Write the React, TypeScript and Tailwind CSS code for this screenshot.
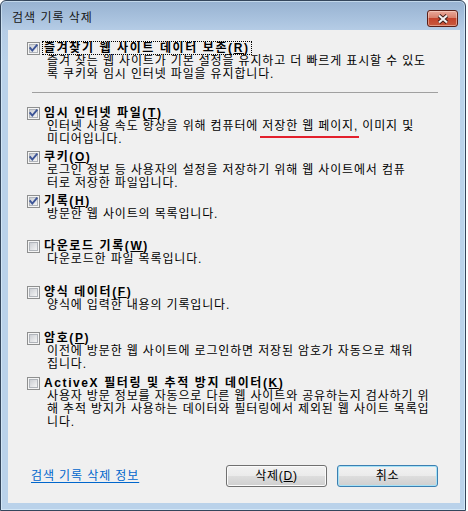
import React from "react";

type Item = {
  title: string;
  key: string;
  checked: boolean;
  focused?: boolean;
  top: string;
  lines: React.ReactNode[];
};

function CheckBox({ checked }: { checked: boolean }) {
  return (
    <svg width="13" height="13" viewBox="0 0 13 13" className="shrink-0">
      <defs>
        <linearGradient id="cbfill" x1="0" y1="0" x2="1" y2="1">
          <stop offset="0" stopColor="#c9ccd1" />
          <stop offset="1" stopColor="#f7f7f7" />
        </linearGradient>
      </defs>
      <rect x="0.5" y="0.5" width="12" height="12" fill="#f5f5f5" stroke="#8e8f8f" />
      <rect x="2.5" y="2.5" width="8" height="8" fill="url(#cbfill)" stroke="#b0b4ba" />
      {checked && (
        <path
          d="M3.3 6.2 L5.3 8.6 L9.7 3.3"
          fill="none"
          stroke="#3d5597"
          strokeWidth="1.9"
          strokeLinecap="square"
        />
      )}
    </svg>
  );
}

function CloseButton() {
  return (
    <div className="mt-[9px] w-[31px] h-[17px] rounded-[3px] border border-[#5a1f18] bg-[linear-gradient(to_bottom,#e9a99b_0%,#d8806c_45%,#c4432c_50%,#c95a3e_100%)] shadow-[inset_0_0_0_1px_rgba(255,230,220,0.45)] flex items-center justify-center">
      <svg width="14" height="10" viewBox="0 0 14 10">
        <path d="M3 1.5 L11 8.5 M11 1.5 L3 8.5" stroke="#3b1a16" strokeWidth="4" />
        <path d="M3 1.5 L11 8.5 M11 1.5 L3 8.5" stroke="#f2f2f2" strokeWidth="2.2" />
      </svg>
    </div>
  );
}

function Marked({ children }: { children: React.ReactNode }) {
  return (
    <span className="relative inline-block leading-[13px]">
      {children}
      <span className="absolute left-[-2px] right-[-1px] top-[16px] h-[2px] bg-[#e3202c]" />
    </span>
  );
}

const items: Item[] = [
  {
    title: "즐겨찾기 웹 사이트 데이터 보존",
    key: "R",
    checked: true,
    focused: true,
    top: "mt-[11px]",
    lines: [
      "즐겨 찾는 웹 사이트가 기본 설정을 유지하고 더 빠르게 표시할 수 있도",
      "록 쿠키와 임시 인터넷 파일을 유지합니다.",
    ],
  },
  {
    title: "임시 인터넷 파일",
    key: "T",
    checked: true,
    top: "mt-[13px]",
    lines: [
      <>
        인터넷 사용 속도 향상을 위해 컴퓨터에 <Marked>저장한 웹 페이지,</Marked> 이미지 및
      </>,
      "미디어입니다.",
    ],
  },
  {
    title: "쿠키",
    key: "O",
    checked: true,
    top: "mt-[4px]",
    lines: [
      "로그인 정보 등 사용자의 설정을 저장하기 위해 웹 사이트에서 컴퓨",
      "터로 저장한 파일입니다.",
    ],
  },
  {
    title: "기록",
    key: "H",
    checked: true,
    top: "mt-[4px]",
    lines: ["방문한 웹 사이트의 목록입니다."],
  },
  {
    title: "다운로드 기록",
    key: "W",
    checked: false,
    top: "mt-[18px]",
    lines: ["다운로드한 파일 목록입니다."],
  },
  {
    title: "양식 데이터",
    key: "F",
    checked: false,
    top: "mt-[19px]",
    lines: ["양식에 입력한 내용의 기록입니다."],
  },
  {
    title: "암호",
    key: "P",
    checked: false,
    top: "mt-[19px]",
    lines: [
      "이전에 방문한 웹 사이트에 로그인하면 저장된 암호가 자동으로 채워",
      "집니다.",
    ],
  },
  {
    title: "ActiveX 필터링 및 추적 방지 데이터",
    key: "K",
    checked: false,
    top: "mt-[5px]",
    lines: [
      "사용자 방문 정보를 자동으로 다른 웹 사이트와 공유하는지 검사하기 위",
      "해 추적 방지가 사용하는 데이터와 필터링에서 제외된 웹 사이트 목록입",
      "니다.",
    ],
  },
];

function Section({ item }: { item: Item }) {
  return (
    <div className={item.top}>
      <div className="flex items-center h-[14px]">
        <CheckBox checked={item.checked} />
        <span
          className={`ml-[2px] px-[1px] h-[14px] leading-[12px] font-bold tracking-[1.6px] whitespace-nowrap border ${
            item.focused ? "border-dotted border-black" : "border-transparent"
          }`}
        >
          {item.title}(<span className="underline underline-offset-[1px]">{item.key}</span>)
        </span>
      </div>
      <div className="pl-[20px]">
        {item.lines.map((l, i) => (
          <div key={i} className="leading-[13px] h-[13px] whitespace-nowrap tracking-[0.85px]">
            {l}
          </div>
        ))}
      </div>
    </div>
  );
}

function Button({ label, k, focused }: { label: string; k?: string; focused?: boolean }) {
  return (
    <button
      className={`w-[101px] h-[22px] rounded-[3px] border text-[12px] leading-[14px] tracking-[0.7px] text-black bg-[linear-gradient(to_bottom,#f2f2f2_0%,#ebebeb_48%,#dddddd_52%,#cfcfcf_100%)] ${
        focused
          ? "border-[#3c7fb1] shadow-[inset_0_0_0_1px_#a6e2f7]"
          : "border-[#707070] shadow-[inset_0_0_0_1px_#fbfbfb]"
      }`}
    >
      {label}
      {k && (
        <>
          (<span className="underline">{k}</span>)
        </>
      )}
    </button>
  );
}

export default function App() {
  return (
    <div className="w-[468px] h-[511px] bg-white font-['Liberation_Sans','Noto_Sans_CJK_KR',sans-serif] text-[12px] text-black">
      <div className="w-[466px] h-[511px] rounded-t-[6px] border border-[#34465c] bg-[linear-gradient(to_bottom,#97b2d1_0px,#a9c2de_18px,#b6cde6_30px,#bad2ea_60px,#bad2ea_100%)] shadow-[inset_0_0_0_1px_rgba(230,245,255,0.55)] flex flex-col">
        {/* title bar */}
        <div className="h-[29px] flex items-start justify-between pl-[11px] pr-[7px]">
          <span className="mt-[10px] leading-[14px] tracking-[1px] text-[#151515]">검색 기록 삭제</span>
          <CloseButton />
        </div>

        {/* client area */}
        <div className="ml-[7px] w-[452px] h-[473px] bg-[#f0f0f0] flex flex-col">
          <div className="pl-[19px]">
            <Section item={items[0]} />
            <div className="mt-[11px] ml-[5px] w-[406px] h-px bg-[#a0a0a0]" />
            {items.slice(1).map((it) => (
              <Section key={it.key} item={it} />
            ))}
          </div>

          <div className="mt-[36px] pl-[23px] pr-[22px] flex items-center justify-between">
            <a href="#" className="text-[#0066cc] underline underline-offset-[2px] leading-[14px] tracking-[0.9px]">
              검색 기록 삭제 정보
            </a>
            <div className="flex gap-[10px]">
              <Button label="삭제" k="D" />
              <Button label="취소" focused />
            </div>
          </div>
        </div>
      </div>
    </div>
  );
}
